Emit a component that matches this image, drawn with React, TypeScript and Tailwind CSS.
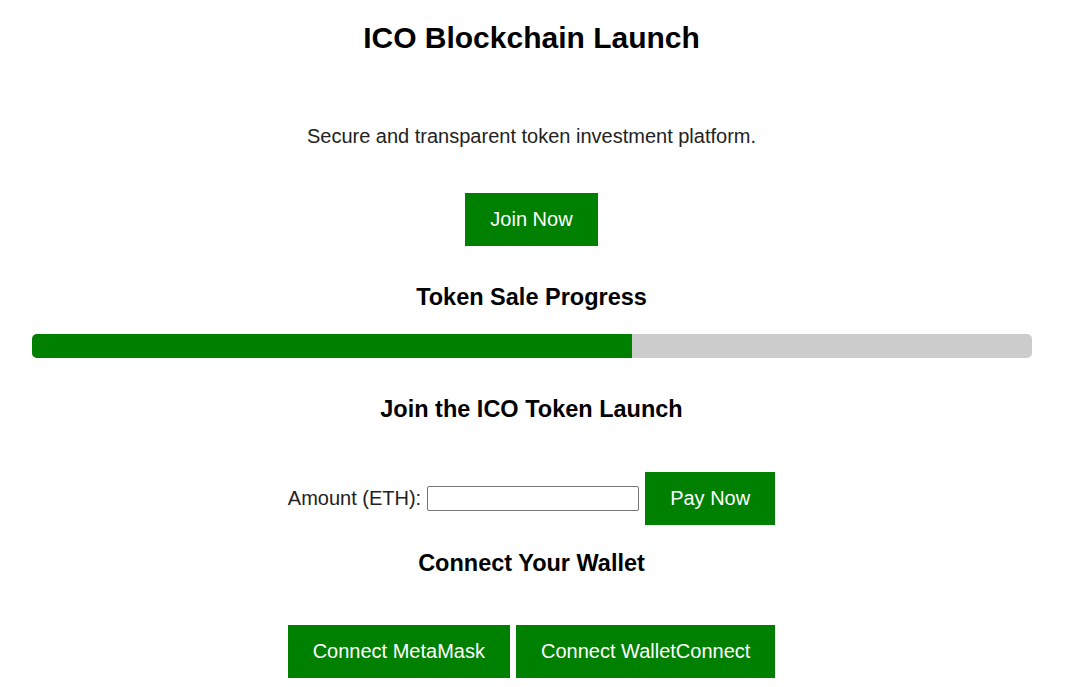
import { useState } from 'react';

const font = { fontFamily: '"Liberation Sans", Arial, sans-serif' };

function GreenButton({ label }: { label: string }) {
  return (
    <button className="h-[53px] px-[25px] bg-[#008000] text-white text-[20px] leading-[23px] cursor-pointer">
      {label}
    </button>
  );
}

function App() {
  const [amount, setAmount] = useState('');
  const progress = 60;

  return (
    <div className="min-h-screen bg-white text-black flex flex-col items-center pr-[2px]" style={font}>
      <h1 className="mt-[21px] text-[30px] leading-[34px] font-bold">ICO Blockchain Launch</h1>

      <p className="mt-[70px] text-[20px] leading-[23px] text-[#222]">
        Secure and transparent token investment platform.
      </p>

      <div className="mt-[45px]">
        <GreenButton label="Join Now" />
      </div>

      <h2 className="mt-[38px] text-[23.5px] leading-[26px] font-bold">Token Sale Progress</h2>

      <div className="mt-[24px] w-full max-w-[1000px] h-6 bg-[#ccc] rounded-[5px] overflow-hidden">
        <div className="h-full bg-[#008000]" style={{ width: `${progress}%` }} />
      </div>

      <h2 className="mt-[38px] text-[23.5px] leading-[26px] font-bold">Join the ICO Token Launch</h2>

      <div className="mt-[50px] flex items-center gap-[6px]">
        <label className="text-[20px] leading-[23px] text-[#222]">Amount (ETH):</label>
        <input
          type="number"
          value={amount}
          onChange={(e) => setAmount(e.target.value)}
          className="w-[212px] h-[25px] border border-[#767676] rounded-[2px] px-1 text-[13px] outline-none"
        />
        <GreenButton label="Pay Now" />
      </div>

      <h2 className="mt-[25px] text-[23.5px] leading-[26px] font-bold">Connect Your Wallet</h2>

      <div className="mt-[49px] flex gap-[6px]">
        <GreenButton label="Connect MetaMask" />
        <GreenButton label="Connect WalletConnect" />
      </div>
    </div>
  );
}

export default App;
